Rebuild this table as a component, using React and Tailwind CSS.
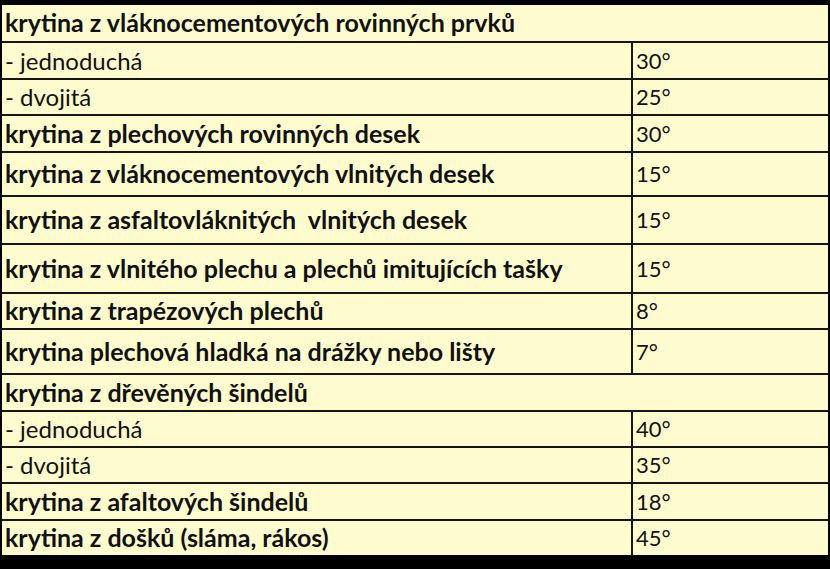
import React from "react";

// Sklony střech podle typu krytiny
const rows = [
  { label: "krytina z vláknocementových rovinných prvků", bold: true, span: true, h: "h-[36px]" },
  { label: "- jednoduchá", value: "30°", h: "h-[35px]" },
  { label: "- dvojitá", value: "25°", h: "h-[34px]" },
  { label: "krytina z plechových rovinných desek", value: "30°", bold: true, h: "h-[35px]" },
  { label: "krytina z vláknocementových vlnitých desek", value: "15°", bold: true, h: "h-[42px]" },
  { label: "krytina z asfaltovláknitých  vlnitých desek", value: "15°", bold: true, h: "h-[46px]" },
  { label: "krytina z vlnitého plechu a plechů imitujících tašky", value: "15°", bold: true, h: "h-[47px]" },
  { label: "krytina z trapézových plechů", value: "8°", bold: true, h: "h-[34px]" },
  { label: "krytina plechová hladká na drážky nebo lišty", value: "7°", bold: true, h: "h-[43px]" },
  { label: "krytina z dřevěných šindelů", bold: true, span: true, h: "h-[35px]" },
  { label: "- jednoduchá", value: "40°", h: "h-[34px]" },
  { label: "- dvojitá", value: "35°", h: "h-[34px]" },
  { label: "krytina z afaltových šindelů", value: "18°", bold: true, h: "h-[35px]" },
  { label: "krytina z došků (sláma, rákos)", value: "45°", bold: true, h: "h-[34px]" },
];

export default function App() {
  return (
    <div className="w-[830px] h-[569px] bg-black px-[2px] pt-[5px] pb-[14px] font-['Lato',sans-serif] text-[#111] leading-tight">
      <div className="flex flex-col gap-[2px] bg-[#151515]">
        {rows.map((row, i) =>
          row.span ? (
            <div
              key={i}
              className={`${row.h} shrink-0 overflow-hidden bg-[#fefccf] flex items-center pl-[3px] whitespace-pre font-bold text-[25px]`}
            >
              {row.label}
            </div>
          ) : (
            <div
              key={i}
              className={`${row.h} shrink-0 overflow-hidden grid grid-cols-[629px_1fr] grid-rows-1 gap-x-[2px]`}
            >
              <div
                className={`bg-[#fefccf] flex items-center pl-[3px] whitespace-pre ${
                  row.bold ? "font-bold text-[25px]" : "font-normal text-[24px]"
                }`}
              >
                {row.label}
              </div>
              <div className="bg-[#fefccf] flex items-center pl-[3px] text-[22px]">{row.value}</div>
            </div>
          )
        )}
      </div>
    </div>
  );
}
